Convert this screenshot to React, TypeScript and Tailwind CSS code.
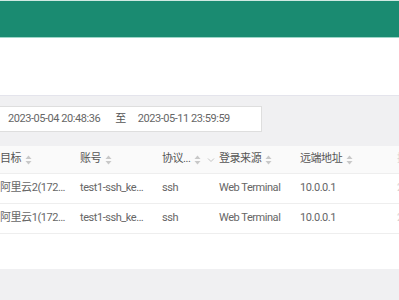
import React from "react";

const SortIcon = () => (
  <svg width="7" height="10" viewBox="0 0 7 10" className="ml-1 shrink-0">
    <path d="M3.5 0.5 L6.5 4 L0.5 4 Z" fill="#c8c8c8" />
    <path d="M3.5 9.5 L6.5 6 L0.5 6 Z" fill="#c8c8c8" />
  </svg>
);

const FilterIcon = () => (
  <svg width="8" height="6" viewBox="0 0 8 6" className="shrink-0">
    <path d="M1 1.5 L4 4.5 L7 1.5" stroke="#c4c4c4" strokeWidth="1" fill="none" />
  </svg>
);

const rows = [
  { target: "阿里云2(172.16.0.2)", account: "test1-ssh_key_account", proto: "ssh", source: "Web Terminal", addr: "10.0.0.1", time: "2023-05-11" },
  { target: "阿里云1(172.16.0.1)", account: "test1-ssh_key_account", proto: "ssh", source: "Web Terminal", addr: "10.0.0.1", time: "2023-05-11" },
];

const cols = [
  "w-[80px] ml-[-8px] pr-[5px]",
  "w-[82px] pr-[9px]",
  "w-[57px]",
  "w-[81px]",
  "w-[97px]",
];

const App = () => {
  return (
    <div
      className="w-[399px] h-[300px] overflow-hidden bg-[#f0f0f2] text-[11px] tracking-[-0.45px] text-[#666]"
      style={{ fontFamily: 'Roboto, "Noto Sans CJK SC", sans-serif' }}
    >
      <div className="h-[38px] bg-[#1a8b71] border-t border-[#cfe9e2] border-b border-b-[#9dd6c8]" />
      <div className="h-[58px] bg-white border-b border-[#e4e4ec]" />

      <div className="pt-[10px] pb-[14px]">
        <div className="flex items-center h-[26px] w-[262px] bg-white border border-[#dedede] border-l-0 pl-2 whitespace-nowrap">
          <span>2023-05-04 20:48:36</span>
          <span className="ml-[15px] text-[#555]">至</span>
          <span className="ml-[12px]">2023-05-11 23:59:59</span>
        </div>
      </div>

      <div className="bg-white h-[123px] w-[440px] whitespace-nowrap">
        <div className="flex h-[28px] items-center bg-[#fafafa] border-b border-[#eeeeee] text-[#555]">
          <div className={`${cols[0]} shrink-0 pl-2 flex items-center`}>目标<SortIcon /></div>
          <div className={`${cols[1]} shrink-0 pl-2 flex items-center`}>账号<SortIcon /></div>
          <div className={`${cols[2]} shrink-0 pl-2 flex items-center`}>
            <span>协议...</span>
            <SortIcon />
            <span className="ml-[6px]"><FilterIcon /></span>
          </div>
          <div className={`${cols[3]} shrink-0 pl-2 flex items-center`}>登录来源<SortIcon /></div>
          <div className={`${cols[4]} shrink-0 pl-2 flex items-center`}>远端地址<SortIcon /></div>
          <div className="shrink-0 pl-2 text-[#d4d4d4]">接入时间</div>
        </div>
        {rows.map((r, i) => (
          <div key={i} className="flex h-[30px] items-center border-b border-[#eeeeee]">
            <div className={`${cols[0]} shrink-0 pl-2 overflow-hidden text-ellipsis`}>{r.target}</div>
            <div className={`${cols[1]} shrink-0 pl-2 overflow-hidden text-ellipsis`}>{r.account}</div>
            <div className={`${cols[2]} shrink-0 pl-2 overflow-hidden text-ellipsis`}>{r.proto}</div>
            <div className={`${cols[3]} shrink-0 pl-2 overflow-hidden text-ellipsis`}>{r.source}</div>
            <div className={`${cols[4]} shrink-0 pl-2 overflow-hidden text-ellipsis`}>{r.addr}</div>
            <div className="shrink-0 pl-2 text-[#d4d4d4]">{r.time}</div>
          </div>
        ))}
      </div>
    </div>
  );
};

export default App;
